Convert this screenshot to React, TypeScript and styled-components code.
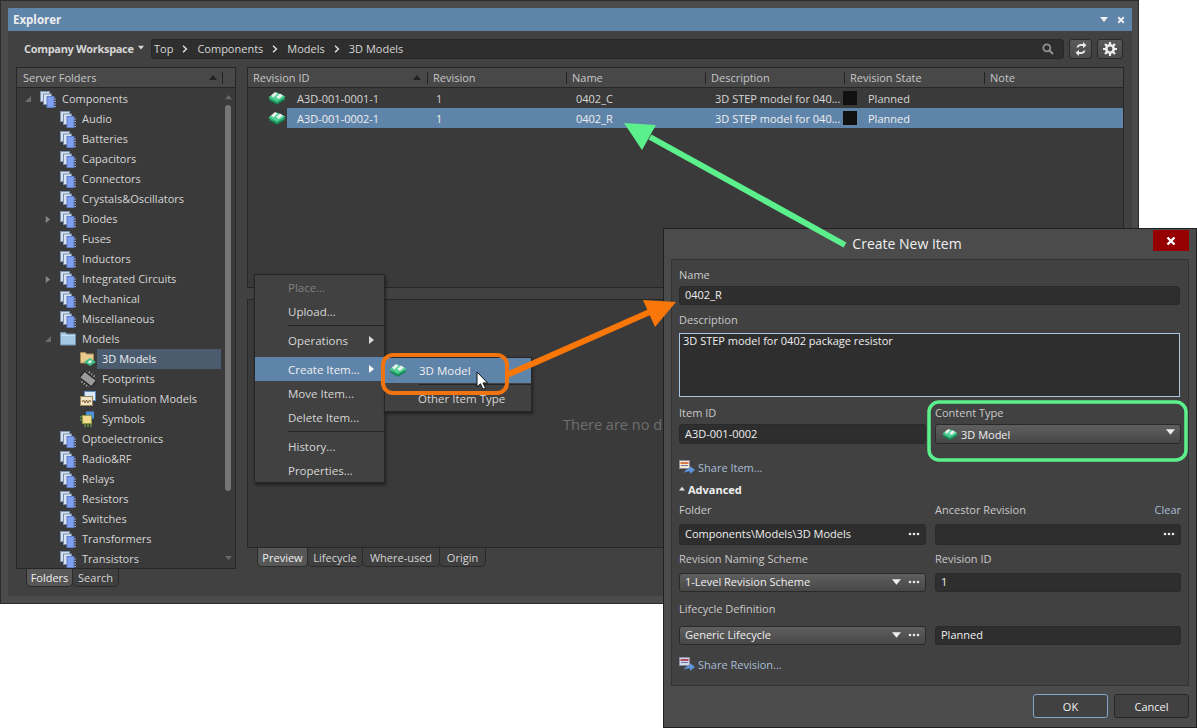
import React from "react";
import styled, { createGlobalStyle } from "styled-components";

const colors = {
  frame: "#4b4b4b",
  inner: "#414141",
  panel: "#3a3a3a",
  header: "#484848",
  line: "#262626",
  input: "#2e2e2e",
  text: "#d6d6d6",
  bright: "#efefef",
  muted: "#8a8a8a",
  select: "#5f84aa",
  link: "#a9bdd6",
};

const GlobalStyle = createGlobalStyle`
  html, body { margin: 0; padding: 0; background: #fff; }
  body { font-family: "Open Sans", "Noto Sans", sans-serif; font-size: 11px; color: ${colors.text}; }
  * { box-sizing: border-box; }
`;

const Stage = styled.div`
  position: relative;
  width: 1197px;
  height: 728px;
  overflow: hidden;
  background: #fff;
`;

/* explorer window */
const ExplorerWindow = styled.div`
  width: 1139px;
  height: 604px;
  padding: 7px;
  background: ${colors.frame};
  border: 1px solid #2c2c2c;
`;

const ExplorerInner = styled.div`
  height: 588px;
  width: 1124px;
  background: ${colors.inner};
  display: flex;
  flex-direction: column;
`;

const TitleBar = styled.div`
  height: 23px;
  background: ${colors.select};
  display: flex;
  align-items: center;
  justify-content: space-between;
  padding: 0 7px 0 5px;
  font-size: 11.5px;
  font-weight: 700;
  color: ${colors.bright};
`;

const TitleIcons = styled.div`
  display: flex;
  align-items: center;
  gap: 9px;
`;

const Toolbar = styled.div`
  height: 20px;
  margin-top: 8px;
  padding: 0 9px 0 16px;
  display: flex;
  align-items: center;
`;

const WorkspaceLabel = styled.div`
  display: flex;
  align-items: center;
  gap: 4px;
  width: 127px;
  padding-bottom: 2px;
  font-weight: 700;
  font-size: 11px;
  letter-spacing: -0.32px;
  color: ${colors.text};
`;

const Crumbs = styled.div`
  flex: 1;
  height: 20px;
  background: ${colors.input};
  border: 1px solid #272727;
  border-radius: 3px;
  display: flex;
  align-items: center;
  padding: 0 9px 1px 2px;
  color: ${colors.text};
`;

const CrumbArrow = styled.span`
  display: inline-flex;
  margin: 0 9px;
`;

const CrumbFill = styled.div`
  flex: 1;
`;

const ToolButton = styled.div<{ $wide?: boolean }>`
  width: ${(p) => (p.$wide ? 26 : 23)}px;
  height: 20px;
  margin-left: 5px;
  background: linear-gradient(#5a5a5a, #4a4a4a);
  border: 1px solid #2a2a2a;
  border-radius: 3px;
  display: flex;
  align-items: center;
  justify-content: center;
`;

const Body = styled.div`
  flex: 1;
  display: flex;
  padding: 8px 0 0 8px;
  gap: 11px;
`;

const Column = styled.div<{ $width: number }>`
  width: ${(p) => p.$width}px;
  display: flex;
  flex-direction: column;
`;

const Panel = styled.div<{ $height: number }>`
  height: ${(p) => p.$height}px;
  background: ${colors.panel};
  border: 1px solid ${colors.line};
  display: flex;
  flex-direction: column;
  overflow: hidden;
`;

const PanelHeader = styled.div`
  height: 20px;
  flex: none;
  background: ${colors.header};
  border-bottom: 1px solid ${colors.line};
  display: flex;
  align-items: center;
  color: #c6c6c6;
`;

const TreeHeader = styled(PanelHeader)`
  padding: 0 7px 0 6px;
  justify-content: space-between;
`;

const HeaderEnd = styled.div`
  display: flex;
  align-items: center;
  gap: 5px;
`;

const HeaderDivider = styled.div`
  width: 1px;
  height: 12px;
  background: #222;
`;

const TreeBody = styled.div`
  flex: 1;
  display: flex;
  min-height: 0;
`;

const TreeList = styled.div`
  flex: 1;
  padding-top: 1px;
`;

const TreeRow = styled.div<{ $level: number }>`
  height: 20px;
  display: flex;
  align-items: center;
  padding-left: ${(p) => p.$level * 20 + 4}px;
`;

const Expander = styled.div`
  width: 19px;
  height: 20px;
  flex: none;
  display: flex;
  align-items: center;
  padding-left: 3px;
`;

const TreeLabel = styled.div<{ $selected?: boolean }>`
  flex: 1;
  height: 20px;
  line-height: 20px;
  margin-left: 1px;
  padding-left: 5px;
  background: ${(p) => (p.$selected ? "#4b5c6f" : "transparent")};
  color: ${(p) => (p.$selected ? colors.bright : colors.text)};
  white-space: nowrap;
`;

const ScrollTrack = styled.div`
  width: 14px;
  flex: none;
  display: flex;
  flex-direction: column;
  align-items: center;
  padding-top: 6px;
`;

const ScrollThumb = styled.div`
  width: 6px;
  height: 386px;
  margin-top: 4px;
  border-radius: 3px;
  background: #767676;
`;

const ScrollSpacer = styled.div`
  flex: 1;
`;

const ScrollEnd = styled.div`
  height: 6px;
`;

const Tabs = styled.div<{ $height: number }>`
  display: flex;
  height: ${(p) => p.$height}px;
  margin-left: 10px;
`;

const Tab = styled.div<{ $active?: boolean; $width: number }>`
  width: ${(p) => p.$width}px;
  display: flex;
  align-items: center;
  justify-content: center;
  background: ${(p) => (p.$active ? "#575757" : "#3f3f3f")};
  color: ${(p) => (p.$active ? colors.bright : colors.text)};
  border: 1px solid #2a2a2a;
  border-top: none;
  border-radius: 0 0 5px 5px;
  margin-right: -1px;
`;

const ColumnCell = styled.div<{ $width: number }>`
  width: ${(p) => p.$width}px;
  height: 12px;
  display: flex;
  align-items: center;
  justify-content: space-between;
  padding: 0 6px 0 5px;
  border-left: 1px solid #222;
  &:first-child { border-left: none; }
`;

const GridRow = styled.div<{ $selected?: boolean }>`
  height: 20px;
  display: flex;
  align-items: center;
  color: ${(p) => (p.$selected ? colors.bright : colors.text)};
`;

const RowIconCell = styled.div`
  width: 39px;
  height: 20px;
  flex: none;
  display: flex;
  align-items: center;
  justify-content: flex-end;
  padding-right: 1px;
`;

const RowBand = styled.div<{ $selected?: boolean }>`
  flex: 1;
  height: 20px;
  display: flex;
  align-items: center;
  background: ${(p) => (p.$selected ? colors.select : "transparent")};
`;

const RowCell = styled.div<{ $width: number }>`
  width: ${(p) => p.$width}px;
  flex: none;
  padding-left: 10px;
  white-space: nowrap;
`;

const StateCell = styled.div`
  display: flex;
  align-items: center;
  gap: 11px;
  margin-left: -1px;
`;

const Swatch = styled.div`
  width: 14px;
  height: 14px;
  background: #111;
`;

const EmptyPanel = styled(Panel)`
  margin-top: 11px;
  padding: 115px 0 0 315px;
  font-size: 14.5px;
  color: #6e6e6e;
  white-space: nowrap;
`;

/* context menu */
const Menu = styled.div<{ $left: number; $top: number; $width: number }>`
  position: absolute;
  left: ${(p) => p.$left}px;
  top: ${(p) => p.$top}px;
  width: ${(p) => p.$width}px;
  background: #414141;
  border: 1px solid #262626;
  box-shadow: 1px 2px 3px rgba(0, 0, 0, 0.45);
  display: flex;
  flex-direction: column;
`;

const MenuItem = styled.div<{ $active?: boolean; $disabled?: boolean; $height?: number }>`
  height: ${(p) => p.$height ?? 24}px;
  display: flex;
  align-items: center;
  justify-content: space-between;
  padding: 0 9px 0 33px;
  font-size: 11.5px;
  background: ${(p) => (p.$active ? colors.select : "transparent")};
  color: ${(p) => (p.$disabled ? "#808080" : p.$active ? colors.bright : colors.text)};
`;

const SubItem = styled(MenuItem)`
  justify-content: flex-start;
  padding-left: 4px;
  padding-bottom: 1px;
  gap: 12px;
`;

const SubText = styled.span<{ $indent?: boolean }>`
  margin-left: ${(p) => (p.$indent ? 29 : 0)}px;
`;

const MenuRule = styled.div<{ $inset: number; $hidden?: boolean; $gap?: number }>`
  height: 1px;
  margin: ${(p) => p.$gap ?? 2}px 0 ${(p) => p.$gap ?? 2}px ${(p) => p.$inset}px;
  background: ${(p) => (p.$hidden ? "transparent" : "#242424")};
`;

/* dialog */
const Dialog = styled.div`
  position: absolute;
  left: 663px;
  top: 228px;
  width: 534px;
  height: 500px;
  background: #4b4b4b;
  border: 1px solid #202020;
  display: flex;
  flex-direction: column;
`;

const DialogTitle = styled.div`
  position: relative;
  height: 30px;
  flex: none;
  display: flex;
  align-items: center;
  justify-content: center;
  font-size: 14px;
  color: ${colors.bright};
  padding: 0 46px 2px 0;
`;

const CloseButton = styled.div`
  position: absolute;
  right: 7px;
  top: 1px;
  width: 36px;
  height: 21px;
  background: #960000;
  display: flex;
  align-items: center;
  justify-content: center;
`;

const DialogBody = styled.div`
  height: 427px;
  margin: 0 7px;
  padding: 7px 8px 0 7px;
  background: #414141;
  border: 1px solid #333;
  display: flex;
  flex-direction: column;
`;

const FieldLabel = styled.div<{ $top?: number; $under?: number }>`
  height: 16px;
  line-height: 16px;
  color: #c9c9c9;
  margin-top: ${(p) => p.$top ?? 0}px;
  margin-bottom: ${(p) => p.$under ?? 3}px;
  display: flex;
  justify-content: space-between;
`;

const ClearLink = styled.span`
  color: ${colors.link};
`;

const TextInput = styled.div<{ $height?: number }>`
  height: ${(p) => p.$height ?? 20}px;
  background: ${colors.input};
  border: 1px solid #2a2a2a;
  border-radius: 3px;
  display: flex;
  align-items: center;
  justify-content: space-between;
  padding: 0 5px 2px;
  color: ${colors.bright};
  white-space: nowrap;
`;

const TextArea = styled.div`
  height: 64px;
  padding: 0 3px;
  line-height: 14px;
  background: ${colors.input};
  border: 1px solid #a9c5e2;
  color: ${colors.bright};
`;

const SelectBox = styled.div<{ $height?: number }>`
  height: ${(p) => p.$height ?? 19}px;
  background: linear-gradient(#5f5f5f, #474747);
  border: 1px solid #2a2a2a;
  border-radius: 3px;
  display: flex;
  align-items: center;
  justify-content: space-between;
  padding: 0 5px 3px;
  color: ${colors.bright};
  white-space: nowrap;
`;

const SelectValue = styled.div`
  display: flex;
  align-items: center;
  gap: 3px;
  padding: 4px 0 0 1px;
`;

const SelectEnd = styled.div`
  display: flex;
  align-items: center;
  gap: 7px;
  padding-top: 2px;
`;

const TwoColumns = styled.div<{ $top?: number }>`
  display: grid;
  grid-template-columns: 247px 246px;
  column-gap: 9px;
  margin-top: ${(p) => p.$top ?? 0}px;
`;

const ShareLink = styled.div<{ $top: number }>`
  height: 16px;
  margin-top: ${(p) => p.$top}px;
  display: flex;
  align-items: center;
  gap: 3px;
  color: ${colors.link};
`;

const SectionToggle = styled.div`
  height: 16px;
  margin-top: 6px;
  display: flex;
  align-items: center;
  gap: 3px;
  font-weight: 700;
  color: ${colors.bright};
`;

const DialogFooter = styled.div`
  flex: 1;
  display: flex;
  justify-content: flex-end;
  gap: 6px;
  padding: 8px 7px 0 0;
`;

const FooterButton = styled.div<{ $primary?: boolean }>`
  width: 75px;
  height: 24px;
  background: #414141;
  border: 1px solid ${(p) => (p.$primary ? "#83a7cb" : "#262626")};
  border-radius: 3px;
  display: flex;
  align-items: center;
  justify-content: center;
  color: ${colors.bright};
`;

const Annotations = styled.svg`
  position: absolute;
  left: 0;
  top: 0;
  pointer-events: none;
`;

/* icons */
const Triangle = ({ dir, color = "#dcdcdc", size = 7 }: { dir: "down" | "right" | "up"; color?: string; size?: number }) => {
  const pts = dir === "down" ? "0,1 8,1 4,6" : dir === "up" ? "0,6 8,6 4,1" : "2,0 7,4 2,8";
  return (
    <svg width={size} height={size} viewBox="0 0 8 8">
      <polygon points={pts} fill={color} />
    </svg>
  );
};

const Collapsed = () => (
  <svg width="8" height="8" viewBox="0 0 8 8">
    <polygon points="7,1 7,7 1,7" fill="#6c6c6c" />
  </svg>
);

const ThreeDots = () => (
  <svg width="12" height="4" viewBox="0 0 12 4">
    <circle cx="2" cy="2" r="1.3" fill="#e8e8e8" />
    <circle cx="6" cy="2" r="1.3" fill="#e8e8e8" />
    <circle cx="10" cy="2" r="1.3" fill="#e8e8e8" />
  </svg>
);

const FolderStack = () => (
  <svg width="16" height="17" viewBox="0 0 16 17" style={{ flex: "none" }}>
    <rect x="0.5" y="0.5" width="9" height="10" fill="#d3deee" stroke="#7f93ad" />
    <rect x="3.500" y="3" width="8" height="10.500" fill="#d9e4f2" stroke="#7b8fab" />
    <rect x="7" y="5.500" width="7" height="11" fill="#7f9ff0" stroke="#5f7cc4" />
    <path d="M14.500 8h1.500M14.500 10.500h1.500M14.500 13h1.500M14.500 15.500h1.500" stroke="#a9bbdc" />
  </svg>
);

const PlainFolder = () => (
  <svg width="16" height="16" viewBox="0 0 16 16" style={{ flex: "none" }}>
    <path d="M0.5 1.500h5l1.500 1.500h8.500v11h-15z" fill="#a3c8e4" stroke="#6f93ad" />
    <rect x="1" y="4" width="14" height="1" fill="#c8e0f2" />
  </svg>
);

const ModelBoard = ({ w = 18 }: { w?: number }) => (
  <svg width={w} height={w * 0.78} viewBox="0 0 18 14" style={{ flex: "none" }}>
    <polygon points="9,5 17.500,8.500 9,13.800 0.500,9" fill="#17804f" />
    <polygon points="9,3.500 17.500,7 9,12 0.500,7.500" fill="#2faa72" />
    <polygon points="9,1.500 17.500,5.500 9,10.500 0.500,6" fill="#4fd096" />
    <polygon points="3,4.500 7,1 9.500,2.500 5.500,6.500" fill="#e6f2ea" />
    <polygon points="8,6 12,2.500 15,4.500 11,8" fill="#e6f2ea" />
  </svg>
);

const ModelsFolder = () => (
  <svg width="16" height="16" viewBox="0 0 16 16" style={{ flex: "none" }}>
    <path d="M0.5 1.500h5l1 1.500h7v9h-13z" fill="#e8c98e" stroke="#a88b58" />
    <polygon points="10,7 16,11 10,15 4,11" fill="#3fbf85" />
    <polygon points="9,9.500 12,9.500 11,12 8,12" fill="#e9f5ee" />
  </svg>
);

const FootprintIcon = () => (
  <svg width="16" height="16" viewBox="0 0 16 16" style={{ flex: "none" }}>
    <g transform="rotate(38 8 8)">
      <rect x="0.5" y="4" width="15" height="8" fill="#9a9a9a" stroke="#1e1e1e" />
      <path d="M2 3v-2M5 3v-2M8 3v-2M11 3v-2M14 3v-2M2 13v2M5 13v2M8 13v2M11 13v2M14 13v2" stroke="#bbb" />
    </g>
  </svg>
);

const SimIcon = () => (
  <svg width="16" height="16" viewBox="0 0 16 16" style={{ flex: "none" }}>
    <rect x="4.500" y="0.500" width="11" height="9" fill="#dbe9f7" stroke="#5c8fc4" />
    <rect x="0.500" y="5.500" width="12" height="9" fill="#f3e6c8" stroke="#9c8558" />
    <path d="M2 11l1.500-2 1.500 3 1.500-3 1.500 3 1.500-3 1.500 2" fill="none" stroke="#7a5a2a" />
  </svg>
);

const SymbolIcon = () => (
  <svg width="16" height="16" viewBox="0 0 16 16" style={{ flex: "none" }}>
    <rect x="6" y="0.500" width="8" height="7" fill="#4a8fe0" />
    <rect x="2.500" y="4.500" width="9" height="8" fill="#efd98a" stroke="#8d9a4a" />
    <path d="M0 6h2M0 9h2M5 13v3M8 13v3M11 13v3" stroke="#7fbf4a" />
  </svg>
);

const ShareIcon = ({ rows }: { rows?: boolean }) => (
  <svg width="16" height="15" viewBox="0 0 16 15" style={{ flex: "none" }}>
    <rect x="0.500" y="0.500" width="10" height="8" fill={rows ? "#d0d8ec" : "#f3e9d2"} stroke="#8b8b9c" />
    <rect x="1.500" y="2" width="8" height="2" fill={rows ? "#b14a5a" : "#d97a4a"} />
    <path d="M2 5.500h7" stroke="#6a78a8" />
    <path d="M5 13c1-3 3-4.500 6-4.500V6l5 4-5 4v-2.500c-2.500 0-4.500 0-6 1.500z" fill="#5d95dc" />
  </svg>
);

const RefreshIcon = () => (
  <svg width="12" height="14" viewBox="0 0 12 14">
    <path d="M1.500 5.500C2 3 4 2 6 2h2V0l3.500 3.200L8 6.200V4H6C4.500 4 3.700 4.600 3.300 5.500z" fill="#e6e6e6" />
    <path d="M10.500 8.500C10 11 8 12 6 12H4v2L.5 10.800 4 7.800V10h2c1.500 0 2.300-.6 2.700-1.500z" fill="#e6e6e6" />
  </svg>
);

const GearIcon = () => (
  <svg width="14" height="14" viewBox="0 0 14 14">
    <circle cx="7" cy="7" r="3.700" fill="none" stroke="#ececec" strokeWidth="2.600" />
    <path d="M7 0v3M7 11v3M0 7h3M11 7h3M2 2l2.100 2.100M9.900 9.900 12 12M12 2 9.900 4.100M4.100 9.900 2 12" stroke="#ececec" strokeWidth="2.200" />
  </svg>
);

const SearchIcon = () => (
  <svg width="12" height="12" viewBox="0 0 12 12">
    <circle cx="4.800" cy="4.800" r="3.500" fill="none" stroke="#8f8f8f" strokeWidth="1.800" />
    <path d="M7.500 7.500L11 11" stroke="#8f8f8f" strokeWidth="2.200" />
  </svg>
);

const CrumbChevron = () => (
  <svg width="6" height="8" viewBox="0 0 6 8">
    <path d="M1 .8L4.400 4 1 7.200" fill="none" stroke="#dcdcdc" strokeWidth="1.500" />
  </svg>
);

const CloseGlyph = ({ size = 9, color = "#fff" }: { size?: number; color?: string }) => (
  <svg width={size} height={size} viewBox="0 0 10 10">
    <path d="M1.500 1.500l7 7M8.500 1.500l-7 7" stroke={color} strokeWidth="2.400" />
  </svg>
);

const Cursor = () => (
  <g transform="translate(477 372)">
    <path d="M0 0v15l3.500-3.200 2.500 5.500 2.500-1.200-2.500-5.200h4.500z" fill="#fff" stroke="#111" strokeWidth="1" />
  </g>
);

type TreeIcon = "stack" | "folder" | "models" | "foot" | "sim" | "symbol";
type TreeItem = { label: string; level: number; icon?: TreeIcon; toggle?: "open" | "closed"; selected?: boolean };

const tree: TreeItem[] = [
  { label: "Components", level: 0, toggle: "open" },
  { label: "Audio", level: 1 },
  { label: "Batteries", level: 1 },
  { label: "Capacitors", level: 1 },
  { label: "Connectors", level: 1 },
  { label: "Crystals&Oscillators", level: 1 },
  { label: "Diodes", level: 1, toggle: "closed" },
  { label: "Fuses", level: 1 },
  { label: "Inductors", level: 1 },
  { label: "Integrated Circuits", level: 1, toggle: "closed" },
  { label: "Mechanical", level: 1 },
  { label: "Miscellaneous", level: 1 },
  { label: "Models", level: 1, toggle: "open", icon: "folder" },
  { label: "3D Models", level: 2, icon: "models", selected: true },
  { label: "Footprints", level: 2, icon: "foot" },
  { label: "Simulation Models", level: 2, icon: "sim" },
  { label: "Symbols", level: 2, icon: "symbol" },
  { label: "Optoelectronics", level: 1 },
  { label: "Radio&RF", level: 1 },
  { label: "Relays", level: 1 },
  { label: "Resistors", level: 1 },
  { label: "Switches", level: 1 },
  { label: "Transformers", level: 1 },
  { label: "Transistors", level: 1 },
];

const treeIcons: Record<TreeIcon, React.ReactNode> = {
  stack: <FolderStack />,
  folder: <PlainFolder />,
  models: <ModelsFolder />,
  foot: <FootprintIcon />,
  sim: <SimIcon />,
  symbol: <SymbolIcon />,
};

const columns = [
  { label: "Revision ID", width: 179 },
  { label: "Revision", width: 139 },
  { label: "Name", width: 139 },
  { label: "Description", width: 139 },
  { label: "Revision State", width: 140 },
  { label: "Note", width: 139 },
];

const revisions = [
  { id: "A3D-001-0001-1", name: "0402_C" },
  { id: "A3D-001-0002-1", name: "0402_R", selected: true },
];

const crumbs = ["Top", "Components", "Models", "3D Models"];

const Explorer = () => (
  <ExplorerWindow>
    <ExplorerInner>
      <TitleBar>
        Explorer
        <TitleIcons>
          <Triangle dir="down" color="#f0f0f0" size={8} />
          <CloseGlyph size={8} color="#f0f0f0" />
        </TitleIcons>
      </TitleBar>
      <Toolbar>
        <WorkspaceLabel>
          Company Workspace
          <Triangle dir="down" size={6} />
        </WorkspaceLabel>
        <Crumbs>
          {crumbs.map((c, i) => (
            <React.Fragment key={c}>
              {i > 0 && (
                <CrumbArrow>
                  <CrumbChevron />
                </CrumbArrow>
              )}
              {c}
            </React.Fragment>
          ))}
          <CrumbFill />
          <SearchIcon />
        </Crumbs>
        <ToolButton>
          <RefreshIcon />
        </ToolButton>
        <ToolButton $wide>
          <GearIcon />
        </ToolButton>
      </Toolbar>
      <Body>
        <Column $width={220}>
          <Panel $height={502}>
            <TreeHeader>
              Server Folders
              <HeaderEnd>
                <Triangle dir="up" color="#222" size={8} />
                <HeaderDivider />
                <span />
              </HeaderEnd>
            </TreeHeader>
            <TreeBody>
              <TreeList>
                {tree.map((row) => (
                  <TreeRow key={row.label} $level={row.level}>
                    <Expander>
                      {row.toggle === "open" && <Collapsed />}
                      {row.toggle === "closed" && <Triangle dir="right" color="#888" />}
                    </Expander>
                    {treeIcons[row.icon ?? "stack"]}
                    <TreeLabel $selected={row.selected}>{row.label}</TreeLabel>
                  </TreeRow>
                ))}
              </TreeList>
              <ScrollTrack>
                <Triangle dir="up" color="#666" />
                <ScrollThumb />
                <ScrollSpacer />
                <Triangle dir="down" color="#666" />
                <ScrollEnd />
              </ScrollTrack>
            </TreeBody>
          </Panel>
          <Tabs $height={18}>
            <Tab $active $width={47}>Folders</Tab>
            <Tab $width={47}>Search</Tab>
          </Tabs>
        </Column>
        <Column $width={877}>
          <Panel $height={221}>
            <PanelHeader>
              {columns.map((c, i) => (
                <ColumnCell key={c.label} $width={c.width}>
                  {c.label}
                  {i === 0 && <Triangle dir="up" color="#222" size={8} />}
                </ColumnCell>
              ))}
            </PanelHeader>
            {revisions.map((r) => (
              <GridRow key={r.id} $selected={r.selected}>
                <RowIconCell>
                  <ModelBoard />
                </RowIconCell>
                <RowBand $selected={r.selected}>
                  <RowCell $width={139}>{r.id}</RowCell>
                  <RowCell $width={140}>1</RowCell>
                  <RowCell $width={139}>{r.name}</RowCell>
                  <RowCell $width={139}>3D STEP model for 040...</RowCell>
                  <StateCell>
                    <Swatch />
                    Planned
                  </StateCell>
                </RowBand>
              </GridRow>
            ))}
          </Panel>
          <EmptyPanel $height={249}>There are no d</EmptyPanel>
          <Tabs $height={19}>
            <Tab $active $width={51}>Preview</Tab>
            <Tab $width={56}>Lifecycle</Tab>
            <Tab $width={78}>Where-used</Tab>
            <Tab $width={47}>Origin</Tab>
          </Tabs>
        </Column>
      </Body>
    </ExplorerInner>
  </ExplorerWindow>
);

const ContextMenu = () => (
  <>
    <Menu $left={254} $top={274} $width={131}>
      <MenuItem $disabled>Place...</MenuItem>
      <MenuItem>Upload...</MenuItem>
      <MenuRule $inset={33} />
      <MenuItem>
        Operations
        <Triangle dir="right" size={8} />
      </MenuItem>
      <MenuRule $inset={33} $hidden />
      <MenuItem $active>
        Create Item...
        <Triangle dir="right" size={8} color="#fff" />
      </MenuItem>
      <MenuItem>Move Item...</MenuItem>
      <MenuItem>Delete Item...</MenuItem>
      <MenuRule $inset={33} />
      <MenuItem>History...</MenuItem>
      <MenuItem>Properties...</MenuItem>
    </Menu>
    <Menu $left={384} $top={357} $width={148}>
      <SubItem $active $height={25}>
        <ModelBoard />
        <SubText>3D Model</SubText>
      </SubItem>
      <MenuRule $inset={34} $gap={1} />
      <SubItem $height={25}>
        <SubText $indent>Other Item Type</SubText>
      </SubItem>
    </Menu>
  </>
);

const CreateItemDialog = () => (
  <Dialog>
    <DialogTitle>
      Create New Item
      <CloseButton>
        <CloseGlyph size={10} />
      </CloseButton>
    </DialogTitle>
    <DialogBody>
      <FieldLabel>Name</FieldLabel>
      <TextInput $height={19}>0402_R</TextInput>
      <FieldLabel $top={7} $under={5}>Description</FieldLabel>
      <TextArea>3D STEP model for 0402 package resistor</TextArea>
      <TwoColumns $top={8}>
        <div>
          <FieldLabel>Item ID</FieldLabel>
          <TextInput>A3D-001-0002</TextInput>
        </div>
        <div>
          <FieldLabel>Content Type</FieldLabel>
          <SelectBox $height={20}>
            <SelectValue>
              <ModelBoard w={16} />
              3D Model
            </SelectValue>
            <Triangle dir="down" size={9} color="#eee" />
          </SelectBox>
        </div>
      </TwoColumns>
      <ShareLink $top={15}>
        <ShareIcon />
        Share Item...
      </ShareLink>
      <SectionToggle>
        <Triangle dir="up" size={6} />
        Advanced
      </SectionToggle>
      <TwoColumns $top={5}>
        <div>
          <FieldLabel $under={6}>Folder</FieldLabel>
          <TextInput $height={21}>
            Components\Models\3D Models
            <ThreeDots />
          </TextInput>
        </div>
        <div>
          <FieldLabel $under={6}>
            Ancestor Revision
            <ClearLink>Clear</ClearLink>
          </FieldLabel>
          <TextInput $height={21}>
            <span />
            <ThreeDots />
          </TextInput>
        </div>
      </TwoColumns>
      <TwoColumns $top={6}>
        <div>
          <FieldLabel $under={6}>Revision Naming Scheme</FieldLabel>
          <SelectBox>
            1-Level Revision Scheme
            <SelectEnd>
              <Triangle dir="down" size={9} color="#eee" />
              <ThreeDots />
            </SelectEnd>
          </SelectBox>
        </div>
        <div>
          <FieldLabel $under={6}>Revision ID</FieldLabel>
          <TextInput $height={19}>1</TextInput>
        </div>
      </TwoColumns>
      <TwoColumns $top={9}>
        <div>
          <FieldLabel $under={9}>Lifecycle Definition</FieldLabel>
          <SelectBox>
            Generic Lifecycle
            <SelectEnd>
              <Triangle dir="down" size={9} color="#eee" />
              <ThreeDots />
            </SelectEnd>
          </SelectBox>
        </div>
        <div>
          <FieldLabel $under={9}>&nbsp;</FieldLabel>
          <TextInput $height={19}>Planned</TextInput>
        </div>
      </TwoColumns>
      <ShareLink $top={11}>
        <ShareIcon rows />
        Share Revision...
      </ShareLink>
    </DialogBody>
    <DialogFooter>
      <FooterButton $primary>OK</FooterButton>
      <FooterButton>Cancel</FooterButton>
    </DialogFooter>
  </Dialog>
);

const Callouts = () => (
  <Annotations width="1197" height="728" viewBox="0 0 1197 728">
    <rect x="383" y="355" width="124" height="38" rx="10" fill="none" stroke="#f17410" strokeWidth="4" />
    <path d="M507 375L652 311" stroke="#f97608" strokeWidth="6" />
    <polygon points="676,302 643,300 655,327" fill="#f97608" />
    <path d="M650 137L845 245" stroke="#5cf08c" strokeWidth="6" />
    <polygon points="624,123 656,125 642,150" fill="#5cf08c" />
    <rect x="929" y="402" width="257" height="58" rx="10" fill="none" stroke="#5cf08c" strokeWidth="3.500" />
    <Cursor />
  </Annotations>
);

export default function App() {
  return (
    <Stage>
      <GlobalStyle />
      <Explorer />
      <ContextMenu />
      <CreateItemDialog />
      <Callouts />
    </Stage>
  );
}
